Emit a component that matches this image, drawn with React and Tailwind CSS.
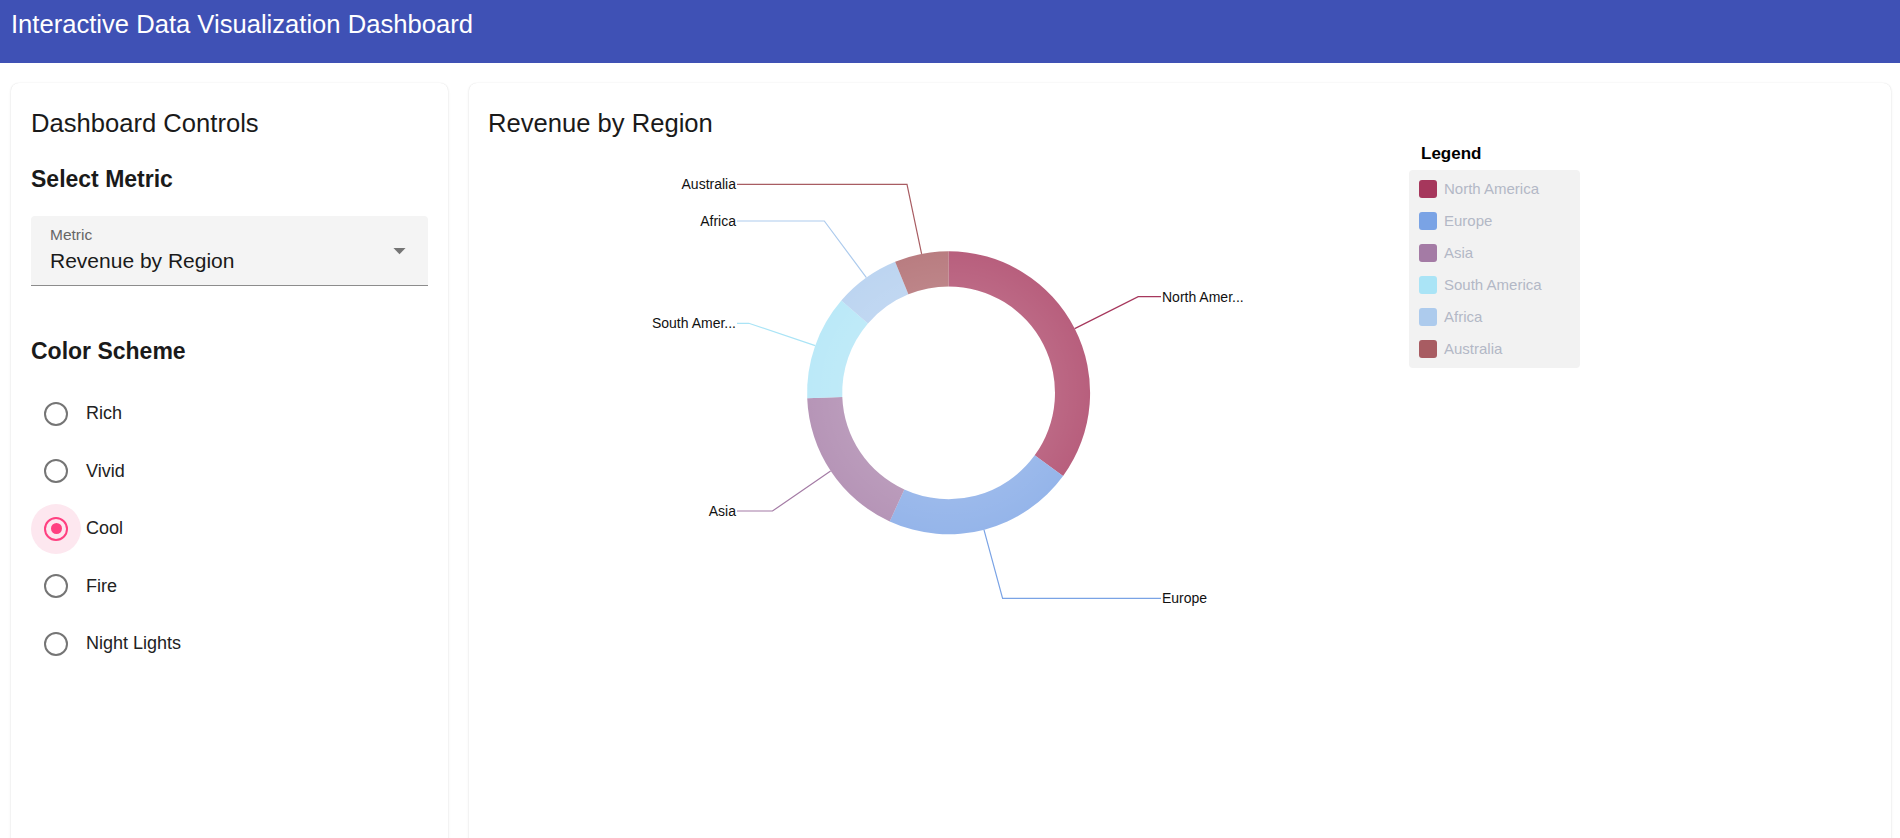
import React, { useState } from 'react';

const FONT = { fontFamily: '"Liberation Sans", Arial, sans-serif' };

// donut geometry (page coordinates, the svg viewBox is offset to match)
const CX = 948.6;
const CY = 392.8;
const R = 141.5;
const RI = 106.4;

const REGIONS = [
  { name: 'North America', color: '#a6375c', from: 0, to: 126 },
  { name: 'Europe', color: '#7aa3e5', from: 126, to: 204.6 },
  { name: 'Asia', color: '#a47ba5', from: 204.6, to: 267.8 },
  { name: 'South America', color: '#aae4f6', from: 267.8, to: 310.7 },
  { name: 'Africa', color: '#adcbed', from: 310.7, to: 337.8 },
  { name: 'Australia', color: '#a85c62', from: 337.8, to: 360 },
];

const LINKS = [
  { label: 'North Amer...', color: '#a6375c', pts: [[1074.7, 328.6], [1138.2, 296.7], [1161, 296.7]], side: 'right' },
  { label: 'Europe', color: '#7aa3e5', pts: [[984, 529.8], [1002.6, 598.3], [1161, 598.3]], side: 'right' },
  { label: 'Asia', color: '#a47ba5', pts: [[830.6, 470.9], [772.5, 511], [737, 511]], side: 'left' },
  { label: 'South Amer...', color: '#aae4f6', pts: [[815.2, 345.6], [748.8, 323.3], [737, 323.3]], side: 'left' },
  { label: 'Africa', color: '#adcbed', pts: [[866.4, 277.6], [824.3, 221], [737, 221]], side: 'left' },
  { label: 'Australia', color: '#a85c62', pts: [[921.6, 253.9], [907, 184.3], [737, 184.3]], side: 'left' },
];

const SCHEMES = ['Rich', 'Vivid', 'Cool', 'Fire', 'Night Lights'];

const pt = (a, rad) => [CX + rad * Math.sin((a * Math.PI) / 180), CY - rad * Math.cos((a * Math.PI) / 180)];

function arcPath(from, to) {
  const [x1, y1] = pt(from, R);
  const [x2, y2] = pt(to, R);
  const [x3, y3] = pt(to, RI);
  const [x4, y4] = pt(from, RI);
  const large = to - from > 180 ? 1 : 0;
  return `M${x1} ${y1} A${R} ${R} 0 ${large} 1 ${x2} ${y2} L${x3} ${y3} A${RI} ${RI} 0 ${large} 0 ${x4} ${y4} Z`;
}

const Radio = ({ label, checked, onChange }) => (
  <label className="flex items-center h-[57.5px] cursor-pointer" onClick={onChange}>
    <span className={`w-[50px] h-[50px] rounded-full flex items-center justify-center ${checked ? 'bg-[#fde7ef]' : ''}`}>
      <span className={`w-[24px] h-[24px] rounded-full border-2 flex items-center justify-center ${checked ? 'border-[#ff4081]' : 'border-[#757575]'}`}>
        {checked && <span className="w-[11px] h-[11px] rounded-full bg-[#ff4081]" />}
      </span>
    </span>
    <span className="ml-[5px] text-[18px] text-[#222]">{label}</span>
  </label>
);

const DonutChart = () => (
  <svg width="921" height="560" viewBox="488 139 921 560" className="shrink-0">
    <defs>
      <radialGradient id="shade" cx={CX} cy={CY} r={R} gradientUnits="userSpaceOnUse">
        <stop offset="0.75" stopColor="#fff" stopOpacity="0.06" />
        <stop offset="1" stopColor="#fff" stopOpacity="0" />
      </radialGradient>
    </defs>
    {REGIONS.map((s) => (
      <path key={s.name} d={arcPath(s.from, s.to)} fill={s.color} fillOpacity="0.8" />
    ))}
    {REGIONS.map((s) => (
      <path key={s.name + '-shade'} d={arcPath(s.from, s.to)} fill="url(#shade)" />
    ))}
    {LINKS.map((l) => (
      <g key={l.label}>
        <polyline points={l.pts.map((p) => p.join(',')).join(' ')} fill="none" stroke={l.color} strokeWidth="1.2" />
        <text
          x={l.side === 'right' ? l.pts[2][0] + 1 : l.pts[2][0] - 1}
          y={l.pts[2][1] + 5}
          textAnchor={l.side === 'right' ? 'start' : 'end'}
          fontSize="14"
          fill="#111"
          style={FONT}
        >
          {l.label}
        </text>
      </g>
    ))}
  </svg>
);

export default function App() {
  const [scheme, setScheme] = useState('Cool');

  return (
    <div className="min-h-screen bg-white text-[#1a1a1a]" style={FONT}>
      <header className="h-[63px] bg-[#3f51b5] pl-[11px] pt-[8px]">
        <h1 className="text-[25.6px] leading-[32px] text-white">Interactive Data Visualization Dashboard</h1>
      </header>

      <main className="flex gap-[21px] pl-[11px] pr-[9px] pt-[20px]">
        <section className="w-[437px] shrink-0 h-[780px] bg-white rounded-lg shadow-[0_1px_3px_rgba(0,0,0,0.1),0_0_1px_rgba(0,0,0,0.12)] px-[20px] pt-[24px]">
          <h2 className="text-[25.6px] leading-[32px]">Dashboard Controls</h2>

          <h3 className="mt-[26px] text-[23px] leading-[28px] font-bold">Select Metric</h3>
          <div className="mt-[23px] h-[70px] bg-[#f4f4f4] rounded-t-[4px] border-b border-[#8c8c8c] pl-[19px] pr-[14px] pt-[9px] flex items-start justify-between">
            <div>
              <div className="text-[15.5px] leading-[20px] text-[#666]">Metric</div>
              <div className="mt-[3px] text-[21px] leading-[26px] text-[#1a1a1a]">Revenue by Region</div>
            </div>
            <svg width="29" height="29" viewBox="0 0 24 24" className="mt-[11px]">
              <path d="M7 10l5 5 5-5z" fill="#757575" />
            </svg>
          </div>

          <h3 className="mt-[51px] text-[23px] leading-[28px] font-bold">Color Scheme</h3>
          <div className="mt-[20px] flex flex-col">
            {SCHEMES.map((s) => (
              <Radio key={s} label={s} checked={scheme === s} onChange={() => setScheme(s)} />
            ))}
          </div>
        </section>

        <section className="flex-1 h-[780px] bg-white rounded-lg shadow-[0_1px_3px_rgba(0,0,0,0.1),0_0_1px_rgba(0,0,0,0.12)] px-[19px] pt-[24px]">
          <h2 className="text-[25.6px] leading-[32px]">Revenue by Region</h2>
          <div className="flex items-start">
            <DonutChart />
            <div className="pt-[3.6px]">
              <div className="pl-[12px] text-[17px] leading-[22px] font-bold text-black">Legend</div>
              <div className="mt-[5.4px] w-[171px] bg-[#f2f2f2] rounded-[4px] py-[3px] pl-[10px]">
                {REGIONS.map((s) => (
                  <div key={s.name} className="h-[32px] flex items-center gap-[7px]">
                    <span className="w-[18px] h-[18px] rounded-[3px]" style={{ backgroundColor: s.color }} />
                    <span className="text-[15px] text-[#b3b8c6]">{s.name}</span>
                  </div>
                ))}
              </div>
            </div>
          </div>
        </section>
      </main>
    </div>
  );
}
